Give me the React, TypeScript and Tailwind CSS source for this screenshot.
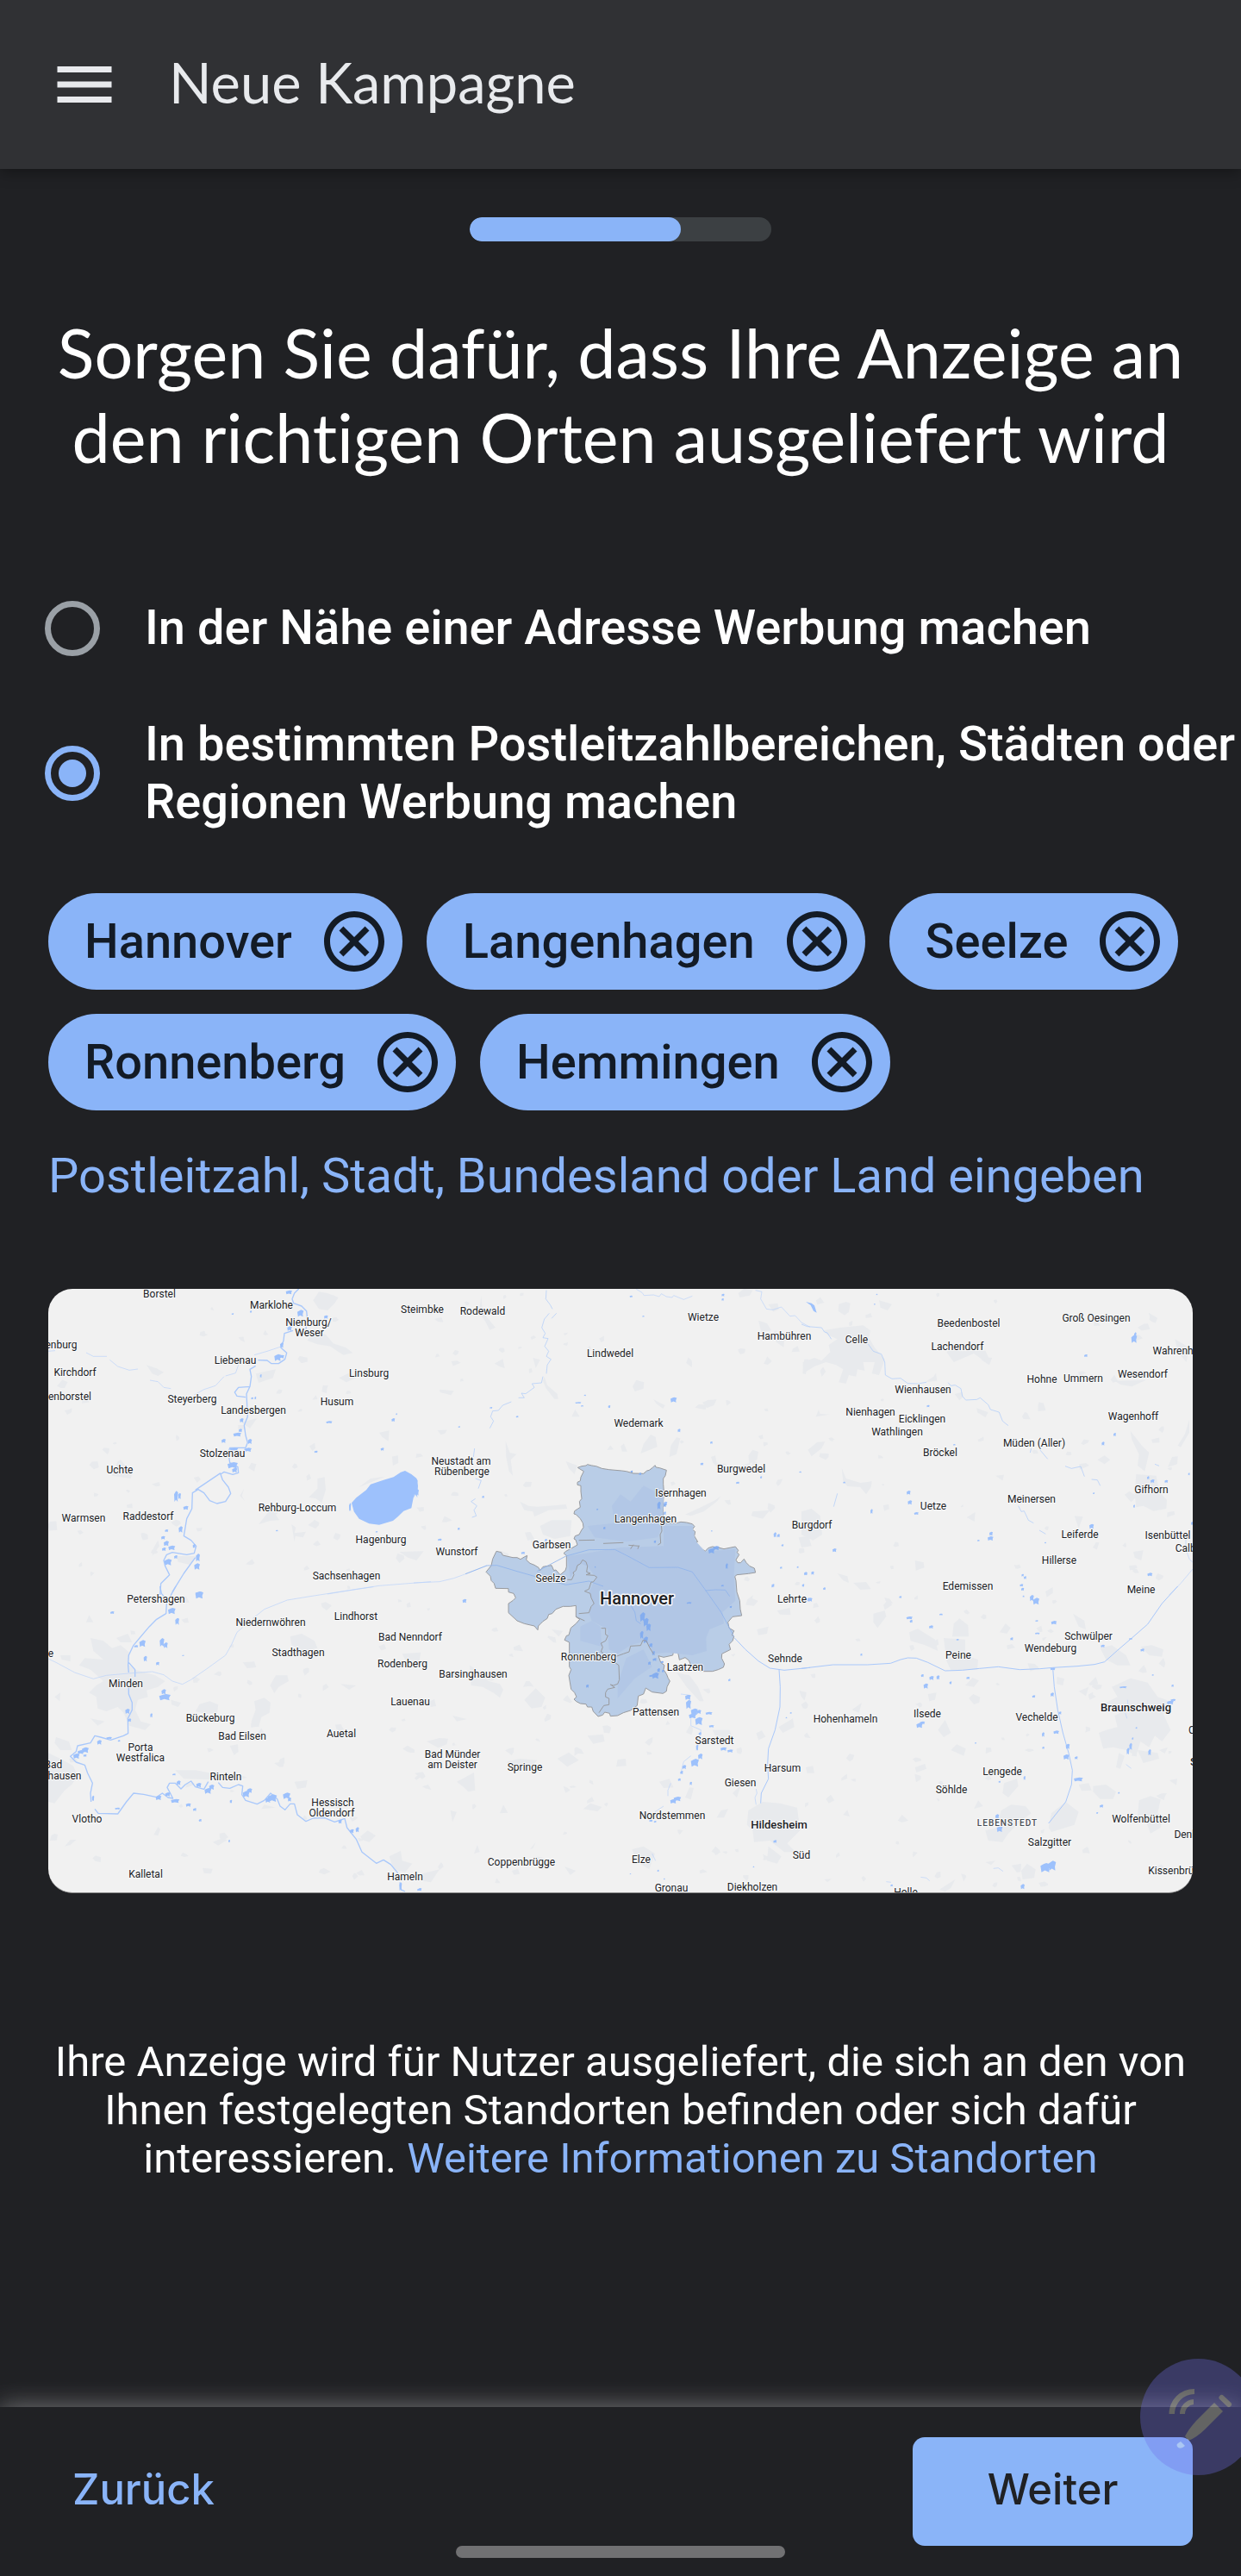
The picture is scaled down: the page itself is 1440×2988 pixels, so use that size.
import React, { useState } from "react";

type Label = [text: string, x: number, y: number, kind?: "city" | "metro" | "district"];
type Box = [x: number, y: number, w: number, h: number];

interface Tile {
  x: number;
  y: number;
  riverWidth: number;
  labels: Label[];
  urban: string[];
  rivers: string[];
  water: Box[];
}

/* Tile content is stored at three units per map pixel. */
const TILES: Tile[] = [
  {
    x: 40,
    y: 1480,
    riverWidth: 4,
    labels: [
      ["Borstel", 435, 64],
      ["Marklohe", 824, 103],
      ["Nienburg/", 955, 163],
      ["Weser", 956, 199],
      ["Steimbke", 1350, 118],
      ["enburg", 92, 241],
      ["Liebenau", 699, 295],
      ["Kirchdorf", 142, 336],
      ["Linsburg", 1164, 340],
      ["enborstel", 122, 421],
      ["Steyerberg", 550, 430],
      ["Husum", 1053, 439],
      ["Landesbergen", 761, 469],
      ["Stolzenau", 655, 619],
      ["Uchte", 298, 676],
      ["Rehburg-Loccum", 915, 808],
      ["Warmsen", 172, 844],
      ["Raddestorf", 397, 838],
      ["Hagenburg", 1206, 919],
      ["Sachsenhagen", 1085, 1045],
    ],
    urban: [
      "M970,85 L990,55 1020,60 1058,75 1045,95 1020,120 990,115 Z",
      "M975,190 L1015,205 1040,235 1085,250 1108,268 1075,275 1030,245 985,238 950,225 Z",
      "M270,695 L290,645 300,640 340,690 335,705 Z",
      "M780,865 L815,820 830,815 852,850 820,852 Z",
      "M985,705 L1010,700 1014,745 1000,790 980,775 955,770 985,740 Z",
      "M1200,545 L1235,538 1232,575 1210,560 Z",
      "M1130,735 L1170,705 1220,698 1180,715 Z",
      "M895,865 L910,875 905,895 945,890 935,910 908,905 905,925 Z",
      "M495,975 L560,975 540,1005 500,995 Z",
      "M1270,960 L1355,958 1330,990 1300,980 Z",
      "M390,310 L425,322 450,335 430,348 410,340 Z",
      "M1060,355 L1100,335 1120,355 1085,370 Z",
      "M730,740 L715,765 732,783 722,765 Z",
      "M755,650 L772,655 765,680 745,668 Z",
      "M720,510 L775,495 750,530 Z",
      "M410,975 L435,940 430,920 415,945 Z",
      "M770,340 L840,325 830,355 780,372 Z",
    ],
    rivers: [
      "M920,45 L905,60 897,80 902,95 930,105 947,122 950,150 945,185 M900,190 L870,200 867,225 858,250 878,268 872,290 850,305 825,305 810,294 778,293 M770,313 L750,325 755,350 750,385 738,410 740,450 742,490 730,520 735,555 742,580 735,598 680,598 675,615 680,650 708,665 710,685 690,691 660,682 648,690 655,710 675,735 683,757 665,785 635,792 610,782 590,755 570,743 550,755 548,810 530,845 520,905 545,920 563,940 556,965 530,970 480,962 460,970 450,990 455,1010 470,1040 440,1070 437,1110 M648,686 L560,745 M560,980 L520,1035 480,1100 M750,385 L710,388 697,405 705,418 735,422",
      "M1020,1107 L1120,1090 1200,1078 1380,1064 M180,267 L205,280 252,280 M262,292 L290,315 330,328 360,324 M402,363 L430,368 450,388 475,392 M555,415 L590,395 630,382 660,350 M665,348 L700,338 710,310 M765,275 L810,262 855,247 M48,262 L72,260",
    ],
    water: [
      [875, 50, 22, 14], [915, 118, 22, 24], [880, 175, 16, 16], [1008, 137, 14, 12], [855, 232, 12, 18],
      [835, 272, 24, 24], [850, 275, 20, 12], [715, 495, 13, 15], [692, 545, 28, 14], [711, 532, 12, 12],
      [651, 567, 15, 14], [743, 567, 14, 18], [680, 597, 30, 12], [730, 598, 26, 14], [672, 648, 36, 22],
      [688, 668, 18, 16], [486, 748, 14, 38], [500, 755, 10, 22], [518, 800, 18, 14], [502, 871, 14, 22],
      [454, 882, 12, 9], [441, 905, 14, 12], [450, 922, 18, 18], [466, 938, 24, 16], [444, 945, 14, 12],
      [452, 985, 26, 22], [486, 972, 12, 12], [551, 933, 10, 14], [562, 966, 14, 28], [556, 1000, 20, 22],
      [1015, 505, 22, 8], [1243, 495, 12, 12], [1258, 478, 5, 6], [974, 608, 12, 8], [1205, 598, 12, 10],
      [840, 884, 8, 5], [686, 130, 8, 5], [750, 121, 7, 7], [1095, 790, 7, 30], [1326, 742, 12, 22],
      [1187, 888, 8, 5], [754, 422, 8, 8], [766, 420, 6, 10], [785, 342, 6, 12], [560, 1099, 26, 11],
    ],
  },
  {
    x: 480,
    y: 1480,
    riverWidth: 2,
    labels: [
      ["Rodewald", 241, 124],
      ["Wietze", 1009, 145],
      ["Hambühren", 1290, 211],
      ["Lindwedel", 684, 271],
      ["Wedemark", 782, 514],
      ["Neustadt am", 166, 646],
      ["Rübenberge", 168, 682],
      ["Burgwedel", 1140, 673],
      ["Isernhagen", 931, 757],
      ["Langenhagen", 806, 847],
      ["Garbsen", 481, 937],
      ["Burgdorf", 1386, 868],
      ["Wunstorf", 149, 961],
      ["Seelze", 478, 1054],
    ],
    urban: [
      "M235,70 L240,125 285,180 265,188 250,160 228,125 Z",
      "M320,575 L335,615 358,620 338,640 345,695 332,680 322,630 Z",
      "M455,350 L465,380 500,410 503,428 490,428 460,390 450,365 Z",
      "M800,585 L825,552 842,560 848,595 790,618 Z",
      "M895,590 L915,562 928,565 915,620 890,630 Z",
      "M775,362 L802,370 800,392 770,402 762,385 Z",
      "M1005,440 L1025,432 1055,430 1045,450 1020,460 Z",
      "M1165,625 L1180,605 1200,612 1195,640 1168,655 Z",
      "M1200,155 L1230,165 1245,190 1210,195 Z",
      "M1255,190 L1290,225 1288,248 1262,230 Z",
      "M370,785 L400,800 430,803 470,800 530,795 535,810 470,815 420,838 415,820 385,815 Z",
      "M440,870 L480,850 550,850 545,905 490,915 450,900 Z",
      "M945,830 L1000,805 1050,780 1070,765 1055,785 1010,820 965,835 Z",
      "M1035,630 L1050,625 1055,650 1090,655 1060,668 1042,650 Z",
      "M90,395 L140,400 130,415 92,405 Z",
      "M550,490 L562,465 578,490 Z",
      "M1360,290 L1375,290 1365,342 1355,340 Z",
      "M1130,60 L1150,45 1180,50 1170,68 1135,75 Z",
      "M835,430 L875,450 868,462 845,445 Z",
      "M415,285 L440,292 425,320 Z",
      "M1340,910 L1375,905 1385,940 1350,945 Z",
      "M1180,820 L1240,815 1215,845 1175,835 Z",
      "M530,645 L570,660 560,690 540,670 Z",
    ],
    rivers: [
      "M462,50 L460,80 475,100 483,115 M472,130 L455,150 446,180 458,200 450,215 468,218 456,245 470,262 462,280 478,290 465,310 462,340 M450,350 L445,372 412,375 420,388 390,410 375,408 385,424 365,424 M340,438 L310,450 295,468 275,470 268,490 278,505 265,530 M212,600 L208,630 M215,705 L235,712 225,740 M215,775 L200,785 220,800 210,815 218,835 203,840 M497,130 L480,148",
      "M775,46 L795,58 802,68 835,66 855,72 862,62 880,72 900,75 905,68 940,82 970,70 M1190,50 L1212,55 1208,80 1228,115 1250,118 1280,108 1310,140 1328,138 1350,162 1380,178",
      "M0,1068 L90,1064 140,1052 200,1030 255,1007",
    ],
    water: [
      [752, 68, 10, 7], [1072, 62, 10, 9], [1072, 78, 8, 8], [796, 138, 7, 5], [894, 422, 22, 18],
      [562, 439, 22, 5], [582, 450, 9, 5], [593, 413, 7, 5], [677, 450, 8, 10], [919, 532, 10, 12],
      [1032, 576, 9, 8], [998, 650, 11, 9], [1122, 716, 12, 8], [1342, 680, 8, 5], [1206, 697, 7, 8],
      [870, 785, 13, 14], [870, 820, 9, 12], [1253, 892, 10, 18], [1265, 898, 10, 12], [1280, 934, 8, 7],
      [153, 876, 8, 8], [84, 914, 14, 8], [374, 960, 14, 8], [456, 915, 9, 9], [1035, 885, 5, 5],
      [1275, 1012, 8, 7], [1360, 1030, 9, 12], [1246, 1072, 10, 10], [1352, 1072, 8, 10], [1334, 1010, 6, 7],
      [0, 702, 14, 70], [356, 487, 9, 6], [265, 456, 9, 6], [155, 523, 7, 5], [238, 765, 8, 8],
    ],
  },
  {
    x: 930,
    y: 1480,
    riverWidth: 2,
    labels: [
      ["Beedenbostel", 583, 165],
      ["Groß Oesingen", 1027, 148],
      ["Celle", 192, 222],
      ["Lachendorf", 544, 246],
      ["Wahrenholz", 1318, 261],
      ["Hohne", 838, 361],
      ["Ummern", 980, 358],
      ["Wesendorf", 1187, 342],
      ["Wienhausen", 424, 396],
      ["Nienhagen", 241, 475],
      ["Eicklingen", 420, 499],
      ["Wathlingen", 332, 544],
      ["Wagenhoff", 1156, 490],
      ["Müden (Aller)", 809, 583],
      ["Bröckel", 483, 615],
      ["Meinersen", 801, 778],
      ["Gifhorn", 1217, 744],
      ["Uetze", 460, 802],
      ["Leiferde", 968, 901],
      ["Isenbüttel", 1276, 904],
      ["Calberlah", 1376, 949],
      ["Hillerse", 897, 991],
      ["Edemissen", 580, 1080],
      ["Meine", 1183, 1092],
    ],
    urban: [
      "M75,190 L135,180 215,172 240,190 235,215 255,250 290,290 270,345 245,340 255,300 215,300 220,330 195,325 190,350 165,345 155,375 130,370 145,325 120,310 85,300 45,315 5,340 5,300 45,285 70,295 100,265 95,240 125,220 90,205 Z",
      "M130,98 L155,90 170,95 165,125 150,137 128,122 Z",
      "M270,85 L315,98 300,120 275,110 Z",
      "M1165,690 L1235,695 1245,750 1272,780 1270,810 1225,818 1190,800 1165,805 1160,760 Z",
      "M1145,540 L1165,565 1185,590 1210,615 1195,680 1170,660 1175,620 1150,570 Z",
      "M140,668 L155,705 205,720 245,715 242,735 225,760 205,735 160,732 145,715 Z",
      "M505,265 L540,240 550,262 640,260 658,298 630,292 600,270 530,300 Z",
      "M22,605 L55,578 82,577 70,600 35,628 Z",
      "M0,820 L35,810 65,835 72,900 40,920 0,900 Z",
      "M1350,500 L1335,550 1310,590 1320,596 1350,545 Z",
      "M1275,665 L1290,630 1310,628 1308,655 Z",
      "M1030,640 L1055,625 1075,640 1055,655 Z",
      "M950,835 L980,838 965,878 Z",
      "M1155,960 L1190,955 1183,990 1160,980 Z",
      "M395,990 L425,997 428,1015 398,1025 Z",
      "M125,1035 L160,1045 165,1068 145,1060 Z",
      "M180,1068 L225,1065 242,1090 205,1092 Z",
      "M610,460 L650,475 640,492 612,475 Z",
      "M575,840 L605,822 602,855 Z",
      "M1090,365 L1200,362 1150,385 1110,378 Z",
      "M460,350 L468,338 472,365 430,370 Z",
      "M1300,220 L1350,250 1340,300 1310,265 Z",
      "M675,695 L705,692 700,712 Z",
      "M50,490 L60,465 65,480 98,482 Z",
    ],
    rivers: [
      "M0,168 L20,176 70,180 80,195 90,198 104,220 M232,237 L250,262 278,272 290,300 292,345 315,358 345,356 370,374 405,375 435,370 M510,371 L520,382 535,380 555,392 560,418 572,432 610,430 622,424 650,448 658,465 688,474 700,505 720,521 M800,600 L796,615 M830,605 L857,637 M918,662 L940,670 972,663 985,698 M1010,708 L1030,710 1040,730 M755,800 L765,820 775,818 790,850 808,860 M828,885 L850,898 M125,757 L112,803 M1230,655 L1245,661",
      "M1338,915 L1338,950 1350,985 1362,997 M1362,1020 L1320,1070 1280,1110",
    ],
    water: [
      [1148, 205, 20, 28], [1158, 196, 8, 20], [984, 273, 12, 9], [436, 449, 10, 8], [1045, 577, 10, 13],
      [1086, 546, 9, 12], [1203, 697, 8, 11], [1215, 708, 14, 12], [1264, 710, 12, 10], [1155, 796, 6, 11],
      [366, 747, 14, 14], [370, 781, 15, 15], [392, 822, 16, 9], [240, 811, 8, 17], [1002, 863, 16, 17],
      [654, 890, 12, 14], [648, 906, 20, 15], [108, 948, 14, 13], [9, 1031, 12, 10], [34, 1028, 10, 12],
      [76, 1084, 8, 8], [1204, 1033, 18, 12], [766, 1037, 8, 9], [774, 1045, 9, 10], [760, 1072, 12, 9],
      [765, 1085, 10, 10], [612, 918, 8, 6], [846, 926, 6, 5], [1346, 685, 6, 9], [1356, 855, 7, 12],
      [528, 585, 8, 5], [145, 716, 8, 6], [1014, 754, 7, 5], [260, 62, 5, 5], [252, 96, 5, 5],
    ],
  },
  {
    x: 40,
    y: 1840,
    riverWidth: 4,
    labels: [
      ["Petershagen", 424, 46],
      ["Lindhorst", 1119, 106],
      ["Niedernwöhren", 822, 127],
      ["e", 56, 235],
      ["Stadthagen", 919, 232],
      ["Bad Nenndorf", 1309, 178],
      ["Rodenberg", 1280, 269],
      ["Minden", 317, 340],
      ["Lauenau", 1307, 403],
      ["Bückeburg", 612, 460],
      ["Bad Eilsen", 722, 523],
      ["Auetal", 1067, 514],
      ["Porta", 370, 562],
      ["Westfalica", 370, 598],
      ["Bad", 65, 622],
      ["hausen", 105, 659],
      ["Rinteln", 667, 664],
      ["Hessisch", 1037, 754],
      ["Oldendorf", 1035, 790],
      ["Vlotho", 184, 811],
      ["Kalletal", 387, 1003],
      ["Hameln", 1289, 1012],
    ],
    urban: [
      "M195,180 L240,190 270,215 300,205 330,230 325,270 350,290 420,310 455,330 430,350 390,362 395,385 360,395 350,430 370,470 405,480 385,500 330,485 310,440 290,420 250,435 220,425 215,385 190,370 215,345 240,330 195,290 155,275 175,250 240,255 205,225 Z",
      "M90,240 L125,240 125,262 95,255 Z",
      "M48,580 L90,600 135,625 150,660 130,690 105,710 70,755 48,750 Z",
      "M75,525 L120,540 130,570 90,570 70,545 Z",
      "M765,400 L800,388 822,405 818,440 790,455 780,490 755,470 770,430 Z",
      "M890,175 L930,165 975,190 985,215 940,225 895,205 Z",
      "M820,345 L840,310 880,310 885,330 850,350 835,372 Z",
      "M575,410 L610,400 640,412 636,440 600,445 560,435 Z",
      "M1235,940 L1275,920 1280,955 1315,965 1290,995 1250,985 Z",
      "M490,640 L560,640 640,655 700,650 740,665 700,675 590,672 520,670 Z",
      "M1135,870 L1160,850 1188,868 1165,890 1140,882 Z",
      "M680,555 L708,550 710,575 695,588 Z",
      "M620,890 L650,878 672,882 640,902 Z",
      "M415,865 L430,838 438,845 430,868 Z",
      "M105,905 L125,882 145,882 125,900 Z",
      "M1065,340 L1120,345 1095,360 Z",
      "M725,265 L765,262 772,282 740,285 Z",
      "M70,385 L90,370 88,400 Z",
      "M475,395 L510,405 500,420 478,412 Z",
      "M180,125 L190,100 205,125 Z",
      "M285,180 L325,165 340,195 300,195 Z",
      "M905,680 L950,675 945,700 915,705 Z",
      "M1280,235 L1345,230 1340,258 1290,255 Z",
      "M195,460 L245,470 220,485 Z",
      "M840,770 L790,775 800,760 Z",
      "M585,980 L620,983 615,1000 590,998 Z",
    ],
    rivers: [
      "M437,0 L442,25 455,40 M492,0 L478,25 460,60 458,95 425,115 400,140 370,175 345,205 328,240 326,275 328,300 M328,265 L350,290 350,315 M328,350 L328,375 340,405 340,430 325,460 326,512 310,520 265,535 230,525 210,520 195,545 150,555 145,575 125,592 145,612 175,622 185,650 202,685 195,720 197,750 M210,775 L222,790 290,792 320,750 345,720 380,724 425,734 445,720 465,735 482,738 462,700 470,685 490,685 510,705 525,690 545,678 560,698 590,706 605,680 M640,683 L655,700 680,703 710,690 725,695 722,725 735,745 775,758 800,745 822,720 845,740 855,765 872,778 890,757 905,757 915,795 945,818 970,807 1010,806 1045,820 1080,808 1088,840 1120,880 1140,925 1190,964 1215,952 1240,968 1265,998 M1272,1030 L1275,1055 1290,1062",
      "M48,252 L75,265 140,300 205,322 250,310 328,303 410,297 450,308 480,330 515,341 545,325 600,287 665,240 685,205 705,160 725,143 M760,112 L800,80 880,48 960,35 1070,18 1180,2",
    ],
    water: [
      [560, 18, 28, 25], [465, 75, 26, 22], [264, 87, 14, 9], [490, 110, 14, 24], [365, 187, 22, 24],
      [347, 205, 14, 8], [436, 180, 16, 30], [450, 195, 14, 20], [380, 242, 12, 20], [423, 263, 12, 12],
      [434, 375, 40, 22], [442, 358, 16, 18], [316, 426, 16, 18], [325, 460, 12, 12], [403, 442, 8, 15],
      [250, 524, 20, 8], [218, 535, 16, 16], [165, 560, 24, 20], [135, 582, 22, 18], [150, 570, 22, 14],
      [170, 585, 12, 8], [290, 535, 9, 6], [495, 676, 14, 16], [563, 684, 18, 16], [592, 702, 24, 20],
      [608, 690, 18, 18], [480, 652, 12, 6], [422, 728, 20, 16], [475, 740, 30, 14], [455, 717, 18, 14],
      [527, 755, 18, 12], [552, 772, 12, 10], [572, 810, 10, 9], [725, 712, 24, 22], [740, 703, 18, 16],
      [804, 735, 18, 18], [812, 724, 32, 26], [865, 718, 26, 22], [882, 735, 12, 14], [680, 743, 8, 12],
      [1098, 845, 14, 14], [1118, 838, 12, 18], [1058, 812, 12, 14], [200, 728, 8, 20], [280, 770, 18, 7],
      [1336, 1050, 12, 10], [1270, 1030, 9, 30], [514, 239, 7, 4], [675, 882, 6, 9],
    ],
  },
  {
    x: 480,
    y: 1840,
    riverWidth: 3,
    labels: [
      ["Lehrte", 1316, 46],
      ["Ronnenberg", 609, 247],
      ["Sehnde", 1292, 252],
      ["Barsinghausen", 206, 307],
      ["Laatzen", 946, 283],
      ["Pattensen", 843, 439],
      ["Sarstedt", 1048, 538],
      ["Bad Münder", 136, 586],
      ["am Deister", 135, 622],
      ["Springe", 388, 631],
      ["Harsum", 1285, 634],
      ["Giesen", 1138, 685],
      ["Nordstemmen", 900, 799],
      ["Hildesheim", 1271, 832, "city"],
      ["Elze", 793, 952],
      ["Süd", 1350, 937],
      ["Coppenbrügge", 375, 961],
      ["Gronau", 898, 1051],
      ["Diekholzen", 1179, 1048],
    ],
    urban: [
      "M195,275 L235,300 260,330 300,340 312,360 300,388 280,372 240,350 200,345 Z",
      "M915,300 L960,310 990,350 1010,400 995,400 950,350 Z",
      "M385,395 L425,355 458,388 445,420 410,425 Z",
      "M325,610 L370,600 430,605 400,640 330,635 Z",
      "M150,680 L210,648 214,710 190,715 175,700 Z",
      "M45,540 L90,528 120,530 115,550 85,562 Z",
      "M1165,780 L1215,750 1275,755 1335,770 1345,850 1300,895 1330,925 1290,925 1240,885 1185,890 1180,850 1160,830 Z",
      "M1235,905 L1280,940 1265,965 1230,955 Z",
      "M605,520 L660,515 665,540 625,548 Z",
      "M500,600 L540,578 575,605 535,628 Z",
      "M710,603 L738,600 740,625 705,628 Z",
      "M590,775 L615,755 655,768 640,783 Z",
      "M855,680 L890,670 905,700 870,702 Z",
      "M300,790 L312,760 328,788 Z",
      "M128,780 L150,785 135,820 Z",
      "M1195,150 L1235,140 1230,165 1200,170 Z",
      "M1265,85 L1310,75 1312,100 1275,98 Z",
      "M135,450 L185,462 150,470 Z",
      "M480,150 L520,155 505,175 Z",
      "M1270,490 L1320,460 1325,490 1285,510 Z",
      "M1040,500 L1100,500 1110,530 1050,520 Z",
      "M760,915 L800,905 840,930 820,985 780,960 Z",
      "M525,975 L565,990 545,1005 Z",
      "M210,930 L222,900 230,925 Z",
      "M405,915 L425,890 415,912 Z",
      "M1070,780 L1095,775 1080,805 1055,805 Z",
      "M1110,720 L1140,690 1125,735 Z",
      "M960,700 L975,702 965,742 945,735 Z",
      "M30,1000 L90,985 60,1030 30,1025 Z",
    ],
    rivers: [
      "M1117,180 L1155,220 1200,260 1240,285 1290,292 1380,283 M1272,290 L1276,350 1275,420 1258,500 1235,565 1232,620 1235,670 1210,720 1208,755",
      "M930,375 L955,378 M965,460 L965,485 1000,500 995,540 M965,590 L940,610 930,650 M895,685 L885,710 885,730 M870,765 L840,785 M1192,705 L1195,720 1188,735 1192,760 M830,930 L842,955",
    ],
    water: [
      [945, 377, 20, 18], [948, 395, 18, 32], [965, 425, 24, 22], [958, 442, 26, 18], [980, 455, 26, 28],
      [985, 430, 16, 14], [1016, 437, 24, 10], [1028, 483, 18, 8], [992, 508, 10, 10], [1068, 560, 22, 12],
      [1092, 568, 20, 10], [983, 550, 8, 22], [965, 600, 28, 28], [990, 582, 16, 20], [935, 622, 14, 14],
      [928, 642, 10, 12], [961, 680, 8, 12], [920, 668, 10, 10], [893, 740, 22, 16], [905, 732, 26, 16],
      [820, 812, 12, 8], [836, 816, 9, 7], [170, 44, 14, 14], [1370, 40, 10, 13], [1095, 322, 8, 9],
      [1252, 883, 12, 10], [1310, 438, 6, 6], [1181, 974, 5, 5], [752, 999, 5, 4], [848, 986, 6, 8],
      [870, 1016, 5, 5], [12, 1052, 14, 8], [1245, 0, 8, 4], [1295, 455, 5, 5],
    ],
  },
  {
    x: 930,
    y: 1840,
    riverWidth: 3,
    labels: [
      ["Schwülper", 998, 175],
      ["Wendeburg", 868, 217],
      ["Peine", 546, 241],
      ["Braunschweig", 1165, 423, "city"],
      ["Ilsede", 438, 445],
      ["Hohenhameln", 153, 463],
      ["Vechelde", 818, 457],
      ["C", 1358, 502],
      ["S", 1364, 612, "city"],
      ["Lengede", 699, 646],
      ["Söhlde", 523, 709],
      ["LEBENSTEDT", 718, 822, "district"],
      ["Wolfenbüttel", 1182, 811],
      ["Denkte", 1354, 865],
      ["Salzgitter", 865, 892],
      ["Kissenbrück", 1305, 991],
      ["Holle", 363, 1065],
    ],
    urban: [
      "M375,160 L405,148 465,185 475,225 430,205 380,190 Z",
      "M530,130 L550,112 580,135 582,175 525,175 Z",
      "M495,180 L570,185 570,240 615,255 612,290 520,292 505,260 Z",
      "M250,95 L290,85 295,105 265,145 250,125 Z",
      "M285,65 L305,42 315,65 290,82 Z",
      "M1080,350 L1145,320 1205,335 1240,385 1270,395 1285,430 1260,445 1285,500 1255,540 1230,520 1210,560 1180,540 1165,590 1130,570 1085,560 1050,565 1035,510 1060,500 1100,490 1090,450 1110,440 1060,405 1100,385 Z",
      "M1040,215 L1080,205 1130,240 1145,275 1100,275 1060,255 Z",
      "M1180,210 L1220,205 1260,220 1255,245 1210,240 Z",
      "M1105,580 L1125,590 1110,635 1095,630 Z",
      "M1170,570 L1240,580 1245,600 1190,615 Z",
      "M870,790 L920,750 965,785 950,830 870,855 860,840 Z",
      "M1175,745 L1215,730 1250,742 1240,790 1260,800 1250,840 1215,860 1200,820 1170,800 Z",
      "M695,780 L730,760 780,765 800,790 760,820 720,860 700,890 650,885 640,850 680,840 Z",
      "M765,990 L785,965 815,985 810,1015 770,1020 Z",
      "M1015,695 L1060,690 1095,715 1085,740 1040,740 1015,715 Z",
      "M965,690 L1000,685 1010,710 975,712 Z",
      "M705,685 L750,670 755,695 720,735 700,720 Z",
      "M520,570 L540,550 572,565 565,590 Z",
      "M475,500 L500,465 520,510 495,525 Z",
      "M335,815 L350,795 372,815 350,822 Z",
      "M145,795 L160,778 168,802 Z",
      "M85,740 L102,725 115,745 95,755 Z",
      "M15,630 L40,625 45,650 20,650 Z",
      "M395,630 L430,618 435,635 400,648 Z",
      "M570,345 L595,318 618,328 600,350 Z",
      "M690,160 L710,130 728,145 715,165 Z",
      "M1000,340 L1025,315 1033,340 1005,345 Z",
      "M965,365 L1000,350 990,382 Z",
      "M1245,570 L1275,560 1265,582 Z",
      "M600,775 L615,745 632,765 Z",
      "M1280,675 L1308,670 1305,692 Z",
      "M890,315 L915,322 910,345 888,340 Z",
      "M440,375 L470,370 465,395 445,400 Z",
      "M175,430 L210,405 200,440 Z",
      "M945,95 L985,120 990,150 965,140 Z",
      "M640,960 L675,955 660,970 Z",
      "M80,1020 L105,1018 90,1030 Z",
      "M480,1055 L535,1020 520,1050 500,1062 Z",
    ],
    rivers: [
      "M0,286 L110,273 230,273 310,268 345,255 370,249 400,250 440,265 500,294 560,292 620,286 685,280 760,290 830,287 875,283 960,278 1020,272 1055,263 1100,223 1150,180 1205,132 1255,60 1310,0 M875,285 L880,350 892,430 910,510 930,580 943,640 940,690 920,750 860,825",
      "M668,982 L685,980 702,992 M415,1012 L435,1015 446,1025 M1130,620 L1148,634 M1127,440 L1133,460 M1135,395 L1137,420 M295,1028 L312,1030",
    ],
    water: [
      [22, 40, 16, 13], [365, 105, 22, 10], [377, 117, 10, 10], [444, 136, 15, 11], [727, 178, 10, 10],
      [480, 95, 12, 6], [539, 183, 9, 6], [795, 30, 14, 22], [806, 40, 22, 24], [869, 120, 20, 13],
      [813, 161, 17, 6], [1042, 203, 14, 10], [1180, 217, 14, 10], [1140, 180, 12, 6], [416, 306, 10, 10],
      [445, 312, 16, 14], [470, 310, 11, 15], [425, 338, 16, 18], [515, 331, 8, 10], [574, 315, 12, 8],
      [866, 283, 18, 9], [803, 379, 11, 9], [867, 370, 12, 14], [400, 475, 22, 18], [412, 470, 18, 10],
      [877, 502, 20, 12], [837, 508, 9, 16], [838, 558, 8, 8], [920, 548, 14, 18], [912, 585, 20, 18],
      [951, 592, 11, 10], [948, 665, 32, 14], [1107, 348, 26, 7], [1272, 398, 24, 13], [1285, 392, 18, 8],
      [1288, 342, 8, 8], [1141, 545, 10, 25], [1132, 562, 9, 24], [1207, 567, 10, 22], [1038, 760, 13, 10],
      [1026, 786, 7, 6], [675, 793, 13, 16], [680, 835, 20, 20], [832, 963, 34, 32], [860, 955, 26, 34],
      [763, 1036, 14, 18], [773, 660, 7, 14], [686, 677, 7, 7], [603, 543, 6, 5], [1163, 490, 6, 6],
      [340, 34, 9, 7], [205, 234, 7, 8], [76, 5, 7, 8], [765, 8, 8, 6], [770, 32, 6, 6], [1102, 716, 6, 6],
      [1220, 306, 6, 6], [895, 436, 10, 10], [310, 1037, 8, 8], [814, 118, 10, 5], [1150, 526, 6, 8],
    ],
  },
];

const REGION_OUTLINE =
  "M391,97 L405,92 420,90 425,86 440,90 455,92 475,100 500,104 545,108 560,110 585,117 620,118 632,108 640,106 652,97 660,89 664,96 676,98 700,106 696,125 689,135 689,155 691,180 688,230 690,290 735,290 750,286 770,288 790,293 798,302 790,312 800,320 797,335 803,345 809,355 795,358 815,375 835,388 845,377 860,372 880,375 900,380 940,372 950,385 946,392 953,400 942,418 948,428 958,428 970,415 978,428 990,440 1006,447 1010,462 985,466 945,470 938,476 942,490 945,530 955,560 957,590 962,612 930,616 914,635 918,655 935,665 928,680 935,685 930,700 918,712 923,730 893,745 892,760 902,780 898,792 880,800 860,806 830,806 800,800 785,785 778,768 765,758 755,762 745,766 742,750 738,735 725,735 722,750 690,757 672,752 680,775 693,785 690,800 700,815 706,830 712,840 702,860 700,875 688,883 650,878 628,864 620,885 602,892 598,925 575,942 550,950 530,960 505,962 502,952 485,948 478,958 462,963 445,945 440,930 425,930 420,920 400,918 385,910 378,903 387,895 380,880 368,868 360,820 368,800 362,790 362,705 345,697 352,682 360,680 367,655 385,640 398,625 385,616 385,577 365,580 340,580 315,590 302,605 290,608 285,622 270,632 262,640 254,648 252,662 240,648 205,640 180,630 150,602 150,570 165,560 175,550 168,535 150,530 150,518 105,517 100,500 90,490 87,475 72,460 90,438 95,415 108,388 125,392 130,402 165,410 180,410 192,416 205,408 215,403 212,418 225,430 240,436 255,445 260,455 270,442 300,437 308,455 315,453 330,470 348,455 352,442 352,403 342,395 350,388 365,380 390,366 384,348 378,345 382,335 396,330 404,315 411,305 409,290 400,275 385,260 378,258 380,248 392,240 400,235 397,215 405,205 402,180 402,160 390,157 390,148 400,143 402,130 412,110 Z";

const REGION_BORDERS =
  "M355,487 L370,487 378,470 375,462 385,455 390,437 400,432 408,418 420,425 425,440 422,460 435,465 420,470 448,472 458,478 445,495 438,495 430,520 415,527 435,535 438,550 448,570 438,580 430,602 395,605 M385,616 L415,630 M395,350 L450,349 M480,361 L550,358 M568,367 L605,370 M575,380 L585,365 M600,380 L605,368 M682,292 L684,318 678,330 680,360 670,366 M473,656 L488,656 488,678 496,682 488,700 472,708 478,722 472,738 480,742 M522,755 L550,745 570,738 575,718 610,716 618,698 630,700 642,725 655,745 M520,775 L534,785 536,835 530,850 515,855 505,852 520,862 495,868 488,880 488,895 500,900 500,922 482,925 465,950";

const REGION_WATER: Box[] = [
  [608, 600, 18, 34], [620, 620, 18, 30], [630, 640, 16, 26], [608, 665, 12, 28], [620, 685, 16, 24],
  [640, 708, 12, 14], [650, 735, 10, 16], [652, 760, 14, 10], [636, 772, 10, 12], [650, 810, 24, 22],
  [640, 818, 12, 8], [668, 795, 10, 14], [668, 215, 12, 28], [480, 303, 8, 9], [846, 378, 22, 18],
  [862, 370, 22, 14], [906, 430, 8, 20], [420, 852, 10, 11], [770, 565, 18, 6], [890, 505, 10, 6],
  [920, 578, 8, 8], [575, 107, 8, 8], [604, 115, 9, 8], [690, 222, 9, 12], [656, 350, 8, 10],
  [456, 240, 7, 5], [450, 440, 4, 6], [680, 770, 10, 8], [684, 800, 8, 10],
];

const LABEL_STYLE = {
  town: "fill-[#202124] text-[12px] font-normal",
  city: "fill-[#202124] text-[13px] font-medium",
  metro: "fill-[#202124] text-[20px] font-medium",
  district: "fill-[#4a4e54] text-[10px] font-medium tracking-[1px]",
};

const jag = ([x, y, w, h]: Box) =>
  `M${x},${y + h * 0.3} L${x + w * 0.35},${y + h * 0.1} ${x + w * 0.6},${y} ${x + w},${y + h * 0.15} ${x + w * 0.85},${y + h * 0.6} ${x + w * 0.9},${y + h} ${x + w * 0.45},${y + h * 0.8} ${x + w * 0.1},${y + h} Z`;

/* Small built-up patches sprinkled over the countryside. */
const PATCHES = (() => {
  let seed = 41;
  const next = () => {
    seed = (seed * 16807) % 2147483647;
    return seed / 2147483647;
  };
  const parts: string[] = [];
  for (let i = 0; i < 330; i++) {
    const x = 60 + next() * 1316;
    const y = 1498 + next() * 690;
    const r = 2 + next() * 3.5;
    const points: string[] = [];
    const n = 4 + Math.floor(next() * 3);
    for (let k = 0; k < n; k++) {
      const a = (k / n) * Math.PI * 2 + next();
      const d = r * (0.5 + next() * 0.9);
      points.push(`${(x + Math.cos(a) * d * 1.2).toFixed(1)},${(y + Math.sin(a) * d).toFixed(1)}`);
    }
    parts.push(`M${points.join(" L")} Z`);
  }
  return parts.join(" ");
})();

const tileTransform = (x: number, y: number) => `translate(${x} ${y}) scale(${1 / 3})`;

function MapLabel({ text, x, y, kind = "town" }: { text: string; x: number; y: number; kind?: keyof typeof LABEL_STYLE }) {
  return (
    <text
      x={Math.round(x)}
      y={Math.round(y)}
      textAnchor="middle"
      stroke="#f8f9fa"
      strokeWidth={kind === "metro" ? 3 : 2}
      strokeLinejoin="round"
      paintOrder="stroke"
      className={LABEL_STYLE[kind]}
    >
      {text}
    </text>
  );
}

function RegionMap() {
  return (
    <svg
      viewBox="56 1495 1328 700"
      role="img"
      aria-label="Karte der Region Hannover"
      className="mt-[98px] block w-full rounded-[28px] border-b border-[#8c8c8c] bg-[#f1f1f1]"
    >
      <path d={PATCHES} fill="#e8eaed" />
      {TILES.map((t) => (
        <g key={`${t.x}-${t.y}`} transform={tileTransform(t.x, t.y)}>
          <path d={t.urban.join(" ")} fill="#e8eaed" />
        </g>
      ))}
      {TILES.map((t) => (
        <g key={`${t.x}-${t.y}`} transform={tileTransform(t.x, t.y)}>
          <path d={t.rivers[0]} fill="none" stroke="#a9c8fb" strokeWidth={t.riverWidth} strokeLinejoin="round" />
          <path d={t.rivers.slice(1).join(" ")} fill="none" stroke="#b9d2fa" strokeWidth="2" strokeLinejoin="round" />
          <path d={t.water.map(jag).join(" ")} fill="#9dc1fc" />
        </g>
      ))}
      <g transform={tileTransform(40, 1480)}>
        <path
          d="M1104,790 L1120,772 1155,745 1170,725 1215,710 1250,700 1275,683 1290,678 1312,690 1328,703 1335,730 1334,745 1322,760 1318,778 1312,808 1285,818 1265,838 1248,852 1200,866 1165,862 1130,845 1112,820 Z"
          fill="#9dc1fc"
        />
      </g>
      <g transform={tileTransform(930, 1480)}>
        <path d="M15,90 L35,95 45,103 53,128 42,122 32,102 Z" fill="#9dc1fc" />
      </g>
      <g transform={tileTransform(540, 1670)}>
        <path d={REGION_OUTLINE} fill="#b9cde7" stroke="#999b9f" strokeWidth="3" strokeLinejoin="miter" />
        <path
          d="M355,405 L420,395 540,375 690,370 690,300 790,300 800,350 835,390 940,380 935,470 940,560 895,600 900,640 850,660 838,690 840,735 790,750 700,740 655,745 630,700 575,715 530,745 500,730 495,660 440,630 430,602 445,570 430,530 455,480 425,440 400,430 365,480 Z"
          fill="#b1c6e5"
        />
        <path
          d="M510,230 L540,190 575,215 620,160 660,180 690,190 688,285 670,340 560,355 450,340 425,300 520,290 Z M400,650 L440,630 470,650 475,720 400,700 Z M530,850 L560,760 620,730 650,790 590,830 530,900 Z"
          fill="#b2c7e6"
        />
        <path
          d="M0,467 L75,438 110,437 180,458 240,475 350,505 430,492 480,510 M250,458 L350,405 430,383 520,382 560,402 640,445 740,444 790,460 835,522 890,600 935,685 M835,525 L870,522 905,523 920,545 M575,575 L590,600 595,630 610,640"
          fill="none"
          stroke="#8fb3ec"
          strokeWidth="2.5"
        />
        <path d={REGION_WATER.map(jag).join(" ")} fill="#84adef" />
        <path d={REGION_BORDERS} fill="none" stroke="#999b9f" strokeWidth="3" />
      </g>
      {TILES.map((t) =>
        t.labels.map(([text, x, y, kind]) => (
          <MapLabel key={text} text={text} x={t.x + x / 3} y={t.y + y / 3 + 4} kind={kind} />
        )),
      )}
      <MapLabel text="Hannover" x={739} y={1861} kind="metro" />
    </svg>
  );
}

const OPTIONS = [
  { id: "address", label: "In der Nähe einer Adresse Werbung machen" },
  { id: "regions", label: "In bestimmten Postleitzahlbereichen, Städten oder Regionen Werbung machen" },
];

function Chip({ name, onRemove }: { name: string; onRemove: () => void }) {
  return (
    <li className="flex h-28 items-center rounded-full bg-[#8ab4f8] pr-3.5 pl-[42px] text-[56px] font-medium text-[#131b26]">
      {name}
      <button type="button" aria-label={`${name} entfernen`} onClick={onRemove} className="ml-[30px]">
        <svg viewBox="0 0 24 24" className="size-[84px]" fill="currentColor" aria-hidden="true">
          <path d="M12 2C6.47 2 2 6.47 2 12s4.47 10 10 10 10-4.47 10-10S17.53 2 12 2zm0 18c-4.41 0-8-3.59-8-8s3.59-8 8-8 8 3.59 8 8-3.59 8-8 8zm3.59-13L12 10.59 8.41 7 7 8.41 10.59 12 7 15.59 8.41 17 12 13.41 15.59 17 17 15.59 13.41 12 17 8.41z" />
        </svg>
      </button>
    </li>
  );
}

export default function App() {
  const [selected, setSelected] = useState("regions");
  const [places, setPlaces] = useState(["Hannover", "Langenhagen", "Seelze", "Ronnenberg", "Hemmingen"]);

  return (
    <div className="flex min-h-screen flex-col overflow-x-clip bg-[#202124] font-['Roboto',sans-serif] text-white">
      <header className="flex h-[196px] items-center gap-14 bg-[#303134] px-14 shadow-[0_4px_16px_rgba(0,0,0,0.35)]">
        <button type="button" aria-label="Menü" className="text-[#e8eaed]">
          <svg viewBox="0 0 24 24" className="size-[84px]" fill="currentColor" aria-hidden="true">
            <path d="M3 18h18v-2H3v2zm0-5h18v-2H3v2zm0-7v2h18V6H3z" />
          </svg>
        </button>
        <div className="pb-1 font-['Lato',sans-serif] text-[65px] text-[#e8eaed]">Neue Kampagne</div>
      </header>

      <main className="flex-1 px-14 pt-14">
        <div
          role="progressbar"
          aria-label="Fortschritt"
          aria-valuenow={70}
          aria-valuemin={0}
          aria-valuemax={100}
          className="mx-auto h-7 w-[350px] overflow-hidden rounded-full bg-[#3c4043]"
        >
          <div className="h-full w-[70%] rounded-full bg-[#8ab4f8]" />
        </div>

        <h1 className="mt-20 -mx-4 text-center font-['Lato',sans-serif] text-[79px] leading-[98px] [font-variant-ligatures:none]">
          Sorgen Sie dafür, dass Ihre Anzeige an den richtigen Orten ausgeliefert wird
        </h1>

        <fieldset className="mt-[139px] -mr-14 -ml-1 flex flex-col gap-[68px]">
          {OPTIONS.map((option) => (
            <div key={option.id} className="flex items-center gap-[52px]">
              <input
                id={option.id}
                type="radio"
                name="targeting"
                checked={selected === option.id}
                onChange={() => setSelected(option.id)}
                className="grid size-16 shrink-0 appearance-none place-items-center rounded-full border-[7px] border-[#9aa0a6] before:size-8 before:rounded-full checked:border-[#8ab4f8] checked:before:bg-[#8ab4f8]"
              />
              <label htmlFor={option.id} className="text-[56px] leading-[67px] font-medium">
                {option.label}
              </label>
            </div>
          ))}
        </fieldset>

        <ul className="mt-[72px] flex flex-wrap gap-7">
          {places.map((name) => (
            <Chip key={name} name={name} onRemove={() => setPlaces(places.filter((p) => p !== name))} />
          ))}
        </ul>

        <input
          type="text"
          aria-label="Ort"
          placeholder="Postleitzahl, Stadt, Bundesland oder Land eingeben"
          className="mt-[42px] block h-[67px] w-full bg-transparent text-[56px] text-[#8ab4f8] outline-none placeholder:text-[#8ab4f8] placeholder:opacity-100"
        />

        <RegionMap />

        <p className="mt-[168px] text-center text-[49px] leading-[56px]">
          Ihre Anzeige wird für Nutzer ausgeliefert, die sich an den von Ihnen festgelegten Standorten befinden oder
          sich dafür interessieren.{" "}
          <a href="#standorte" className="text-[#8ab4f8]">
            Weitere Informationen zu Standorten
          </a>
        </p>
      </main>

      <footer className="relative flex h-[196px] items-start justify-between bg-[#202124] px-14 pt-[35px] font-['Inter',sans-serif] text-[49px] font-medium shadow-[0_0_28px_rgba(255,255,255,0.4)]">
        <button type="button" className="h-[126px] px-7 pb-1 text-[#8ab4f8]">
          Zurück
        </button>
        <button type="button" className="h-[126px] w-[325px] rounded-[14px] bg-[#8ab4f8] pb-1 text-[#202124]">
          Weiter
        </button>
        <div className="absolute bottom-[21px] left-1/2 h-3.5 w-[382px] -translate-x-1/2 rounded-full bg-[#717173]" />
        <button type="button" aria-label="Stiftmenü" className="absolute -top-14 -right-[18px] size-[135px] opacity-[0.32]">
          <svg viewBox="0 0 135 135" className="size-full" aria-hidden="true">
            <circle cx="67.5" cy="67.5" r="67.5" fill="#716feb" />
            <g fill="#f1f1e9">
              <path d="M33.500,64 A29,29 0 0 1 63,35 V41 A23,23 0 0 0 40,64 Z" />
              <path d="M46,64 A17,17 0 0 1 62,47 V53 A11,11 0 0 0 52,64 Z" />
              <path d="M86,51 L96,61 L75,82 Q66,91 56,95 L52,90 Q56,82 65,72 Z" />
              <path d="M47,96 L52,101 Q48,105 44,103 Q41,100 44,98 Z" />
            </g>
            <path d="M94.500,45 L103,53" stroke="#f1f1e9" strokeWidth="6" strokeLinecap="round" />
          </svg>
        </button>
      </footer>
    </div>
  );
}
